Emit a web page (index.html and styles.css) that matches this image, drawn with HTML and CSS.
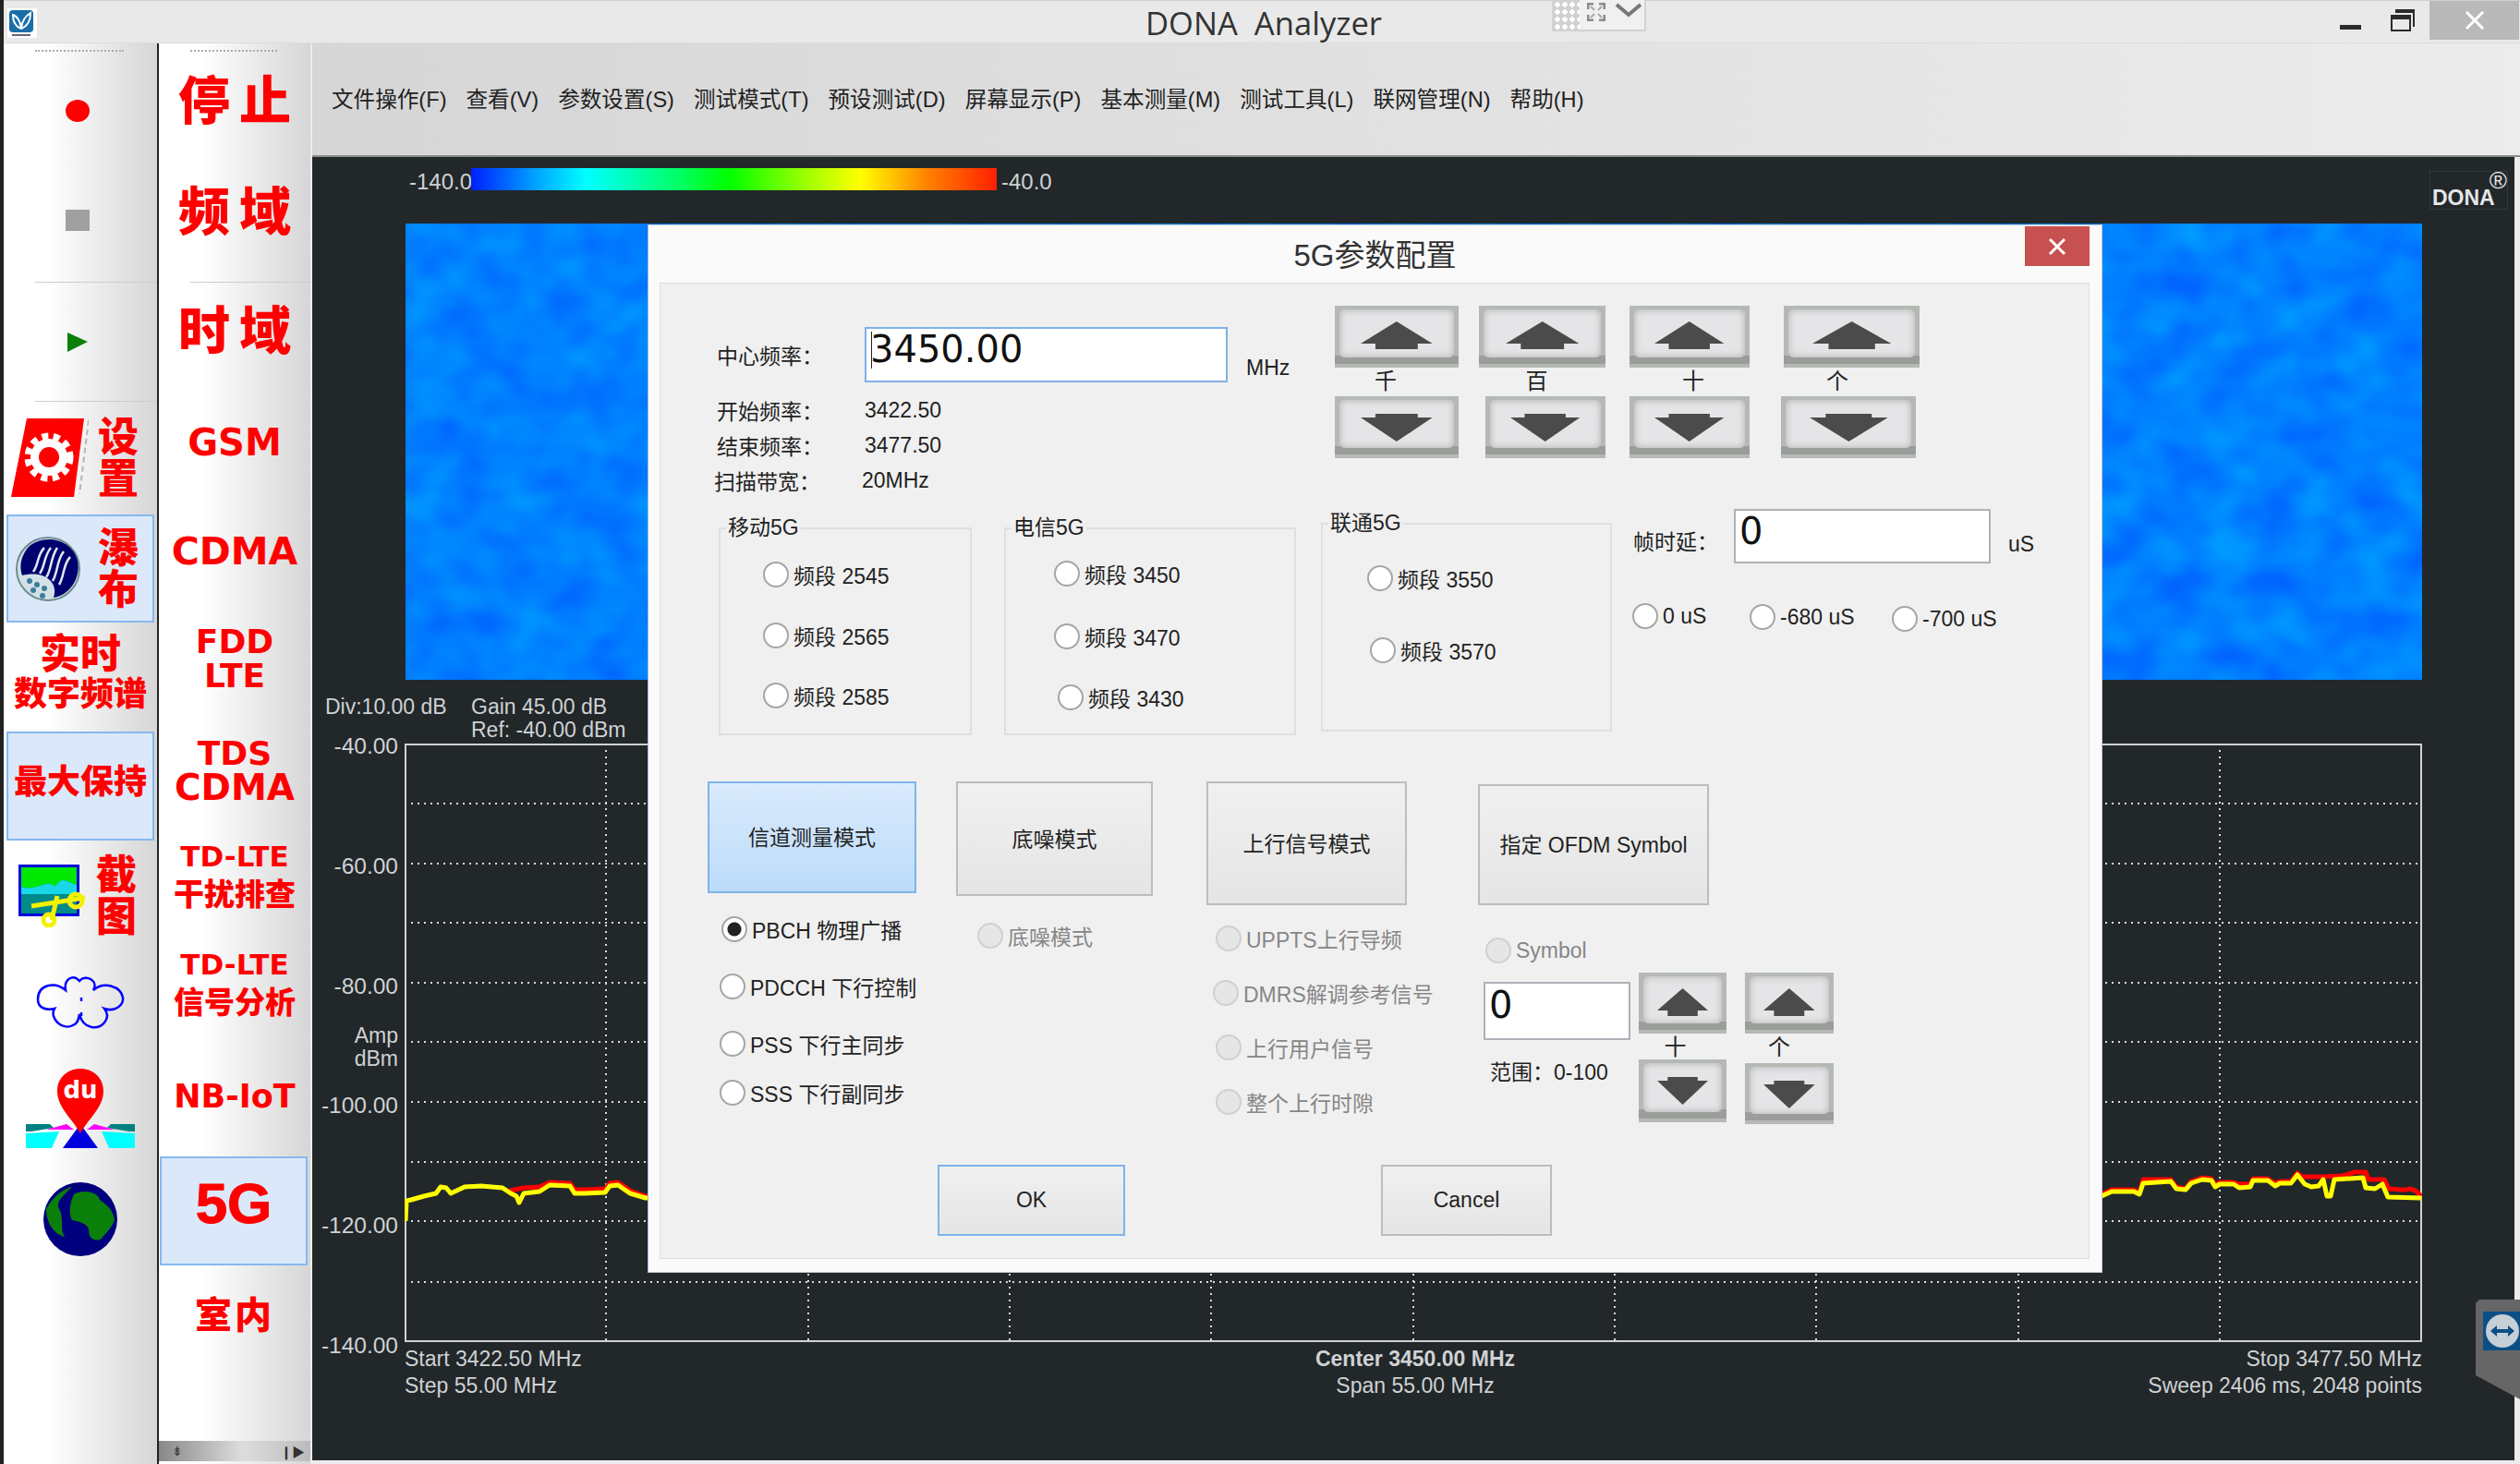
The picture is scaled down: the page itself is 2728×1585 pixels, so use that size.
FILE: index.html
```html
<!DOCTYPE html>
<html lang="zh-CN">
<head>
  <meta charset="UTF-8" />
  <title>DONA Analyzer</title>
  <link rel="stylesheet" href="styles.css">
</head>
<body>
  <svg class="defs" width="0" height="0">
    <symbol id="arrow-up" viewBox="0 0 78 30" preserveAspectRatio="none"><path d="M39 0 78 24H62V30H16V24H0Z"/></symbol>
    <symbol id="arrow-down" viewBox="0 0 78 30" preserveAspectRatio="none"><path d="M16 0H62V4H78L39 30 0 4H16Z"/></symbol>
  </svg>

  <div class="app">
    <header class="titlebar">
      <div class="title-left">
        <svg class="app-logo" viewBox="0 0 32 32">
          <rect width="32" height="32" fill="#fff"/>
          <rect x="2" y="2" width="26" height="24" rx="4" fill="#1a6ea8"/>
          <path d="M6 7C10 8 14 14 15 21 16 14 20 8 25 5 25 12 23 19 15 22 9 20 6 14 6 7Z" fill="none" stroke="#fff" stroke-width="2"/>
          <rect x="5" y="28" width="20" height="2" fill="#667"/>
        </svg>
      </div>
      <div class="title">DONA&nbsp; Analyzer</div>
      <div class="win-controls">
        <span class="win-min"></span>
        <svg class="win-restore" viewBox="0 0 26 24"><path d="M5 1H25V19M1 7H21V23H1Z" fill="none" stroke="#2b2b2b" stroke-width="2"/><rect x="1" y="7" width="20" height="4" fill="#2b2b2b"/><rect x="5" y="1" width="20" height="3" fill="#2b2b2b"/></svg>
        <span class="win-close"><svg viewBox="0 0 20 20"><path d="M1 1 19 19M19 1 1 19" stroke="#fff" stroke-width="3"/></svg></span>
      </div>
    </header>

    <!-- remote session widget sitting on the title bar -->
    <div class="remote-bar">
      <span class="remote-grip"></span>
      <svg class="remote-icon" viewBox="0 0 20 20"><path d="M1 7V1H7M13 1H19V7M19 13V19H13M7 19H1V13" fill="none" stroke="#8a8a8a" stroke-width="3"/><path d="M4 4 8 8M16 4 12 8M4 16 8 12M16 16 12 12" stroke="#aaa" stroke-width="2"/></svg>
      <svg class="remote-icon-wide" viewBox="0 0 30 16"><path d="M2 2 15 13 28 2" fill="none" stroke="#777" stroke-width="4"/></svg>
    </div>

    <div class="workspace">
      <nav class="toolbar toolbar-a">
        <div class="grip"></div>
        <div class="tool tool-nudge"><span class="rec-dot"></span></div>
        <div class="tool tool-nudge"><span class="stop-box"></span></div>
        <div></div>
        <div class="tool-sep"></div>
        <div class="tool tool-nudge"><svg class="play-icon" viewBox="0 0 22 21"><path d="M0 0 22 10 0 21Z" fill="#0a800a"/></svg></div>
        <div class="tool-sep"></div>
        <div class="tool tool-split tool-gear">
          <svg class="gear-icon" viewBox="0 0 84 86">
            <path d="M17 0H79L68 85H0Z" fill="#f00"/>
            <path d="M84 2 74 82" stroke="#b5b5b5" stroke-width="2" stroke-dasharray="6 4"/>
            <circle cx="41" cy="42" r="23" fill="none" stroke="#fff" stroke-width="7" stroke-dasharray="7 5.5"/>
            <circle cx="41" cy="42" r="20" fill="#fff"/>
            <circle cx="41" cy="42" r="11" fill="#f00"/>
          </svg>
          <div class="stack">设<br>置</div>
        </div>
        <div class="tool tool-split tool-on">
          <svg class="fall-icon" viewBox="0 0 72 74">
            <circle cx="36" cy="37" r="34" fill="#d4e0e8" stroke="#6b8f8f" stroke-width="2"/>
            <path d="M14 14C30-2 62 4 68 28 72 48 58 66 42 68 48 50 30 38 8 44 4 32 8 22 14 14Z" fill="#00006e"/>
            <g fill="none" stroke="#dfe8f0" stroke-width="2.5">
              <path d="M20 40C26 32 24 22 32 14"/><path d="M27 42C33 34 31 24 39 14"/><path d="M34 46C40 38 38 26 46 14"/><path d="M41 50C47 40 45 28 53 18"/><path d="M48 54C54 44 52 32 60 24"/>
            </g>
            <g fill="#3a7f9a"><circle cx="16" cy="50" r="3"/><circle cx="24" cy="54" r="3"/><circle cx="32" cy="58" r="3"/><circle cx="20" cy="60" r="3"/><circle cx="30" cy="66" r="3"/></g>
          </svg>
          <div class="stack">瀑<br>布</div>
        </div>
        <div class="tool tool-lines tool-up"><span class="zh-44">实时</span><span class="zh-36">数字频谱</span></div>
        <div class="tool tool-on tool-up"><span class="zh-36">最大保持</span></div>
        <div class="tool tool-split tool-shot">
          <svg class="shot-icon" viewBox="0 0 74 68">
            <rect width="66" height="56" fill="#00d"/>
            <rect x="3" y="3" width="60" height="50" fill="#008a8a"/>
            <path d="M3 3H63V22C50 18 48 12 40 24 30 14 20 30 3 24Z" fill="#00e800"/>
            <path d="M3 24C20 30 30 14 40 24 48 12 50 18 63 22V32H3Z" fill="#18d8e8"/>
            <g fill="none" stroke="#f2f200" stroke-width="5"><path d="M14 45 72 36"/><path d="M42 34 36 60"/><circle cx="62" cy="39" r="7"/><circle cx="33" cy="60" r="6"/></g>
          </svg>
          <div class="stack">截<br>图</div>
        </div>
        <div class="tool">
          <svg class="cloud-icon" viewBox="0 0 96 62">
            <path d="M47 8C40 0 30 6 32 18 20 8 2 12 2 28 2 38 12 40 20 38 14 48 28 62 40 56 46 54 46 48 47 44 48 48 50 56 60 58 72 60 82 48 74 38 86 42 95 34 94 26 92 14 74 8 62 18 68 8 54 0 47 8Z" fill="none" stroke="#00f" stroke-width="2.5"/>
            <path d="M49 26V30M49 42V46" stroke="#00f" stroke-width="2.5"/>
          </svg>
        </div>
        <div class="tool">
          <svg class="pin-icon" viewBox="0 0 118 90">
            <path d="M0 62H26L30 66 6 70H0ZM118 62H92L88 66 112 70H118Z" fill="#008080"/>
            <path d="M22 68 44 62 52 68ZM96 68 74 62 66 68Z" fill="#f0f"/>
            <path d="M0 72 36 70 28 88H0ZM118 72 82 70 90 88H118Z" fill="#0ff"/>
            <path d="M40 88 59 62 78 88Z" fill="#00d"/>
            <path d="M59 72C50 56 34 44 34 26 34 12 45 2 59 2 73 2 84 12 84 26 84 44 68 56 59 72Z" fill="#f00"/>
            <text class="pin-text" x="59" y="34">du</text>
          </svg>
        </div>
        <div class="tool">
          <svg class="globe-icon" viewBox="0 0 82 82">
            <circle cx="41" cy="41" r="40" fill="#00007e"/>
            <path d="M34 14C46 8 60 12 62 20 70 26 76 30 78 42 74 52 68 56 64 62 56 66 50 62 50 52 48 46 42 44 32 42 28 34 30 22 34 14Z" fill="#0a800a"/>
            <path d="M4 30C10 18 22 8 32 6 22 16 14 22 18 30 24 40 18 52 24 60 14 58 4 46 4 30Z" fill="#0a800a"/>
          </svg>
        </div>
      </nav>

      <nav class="toolbar toolbar-b">
        <div class="grip"></div>
        <div class="tool tool-low"><span class="zh-56">停止</span></div>
        <div class="tool tool-low"><span class="zh-56">频域</span></div>
        <div></div>
        <div class="tool-sep"></div>
        <div class="tool tool-low"><span class="zh-56">时域</span></div>
        <div class="tool tool-low"><span class="lat lat-40">GSM</span></div>
        <div class="tool tool-low"><span class="lat lat-41">CDMA</span></div>
        <div class="tool tool-lines tool-tight tool-low"><span class="lat lat-36">FDD</span><span class="lat lat-36">LTE</span></div>
        <div class="tool tool-lines tool-tight tool-low"><span class="lat lat-36">TDS</span><span class="lat lat-39">CDMA</span></div>
        <div class="tool tool-lines tool-low"><span class="lat lat-31">TD-LTE</span><span class="zh-34">干扰排查</span></div>
        <div class="tool tool-lines tool-low"><span class="lat lat-31">TD-LTE</span><span class="zh-34">信号分析</span></div>
        <div class="tool tool-low"><span class="lat lat-35">NB-IoT</span></div>
        <div></div>
        <div class="tool tool-on tool-5g"><span class="big-5g">5G</span></div>
        <div class="tool"><span class="zh-40">室内</span></div>
        <div></div>
        <div class="scroll-strip"><span class="scroll-left">⇟</span><span class="scroll-right">❙▶</span></div>
      </nav>

      <main class="main">
        <div class="menubar">
          <span>文件操作(F)</span><span>查看(V)</span><span>参数设置(S)</span><span>测试模式(T)</span><span>预设测试(D)</span><span>屏幕显示(P)</span><span>基本测量(M)</span><span>测试工具(L)</span><span>联网管理(N)</span><span>帮助(H)</span>
        </div>

        <section class="plot">
          <div class="scale">
            <span class="scale-min">-140.0</span>
            <span class="scale-bar"></span>
            <span class="scale-max">-40.0</span>
          </div>

          <svg class="waterfall">
            <filter id="fall-noise" color-interpolation-filters="sRGB" x="0" y="0" width="100%" height="100%">
              <feTurbulence type="fractalNoise" baseFrequency="0.02 0.024" numOctaves="2" seed="7"/>
              <feColorMatrix values="0 0 0 0 0  0.3 0 0 0 0.35  0 0 0 0 1  0 0 0 0 1"/>
            </filter>
            <rect width="100%" height="100%" filter="url(#fall-noise)"/>
          </svg>

          <div class="readout">
            <div class="readout-div">Div:10.00 dB</div>
            <div>Gain 45.00 dB<br>Ref: -40.00 dBm</div>
          </div>

          <div class="chart">
            <div class="axis">
              <div class="tick">-40.00</div>
              <div class="tick">-60.00</div>
              <div class="tick">-80.00</div>
              <div class="tick">-100.00</div>
              <div class="tick">-120.00</div>
              <div class="tick">-140.00</div>
              <div class="axis-unit">Amp<br>dBm</div>
            </div>
            <svg class="chart-svg" viewBox="0 0 2184 648">
              <rect x="1" y="1" width="2182" height="646" fill="none" stroke="#cfd2d3" stroke-width="2"/>
              <g class="grid-lines">
                <path d="M0 65H2184M0 130H2184M0 194H2184M0 259H2184M0 323H2184M0 388H2184M0 453H2184M0 517H2184M0 583H2184"/>
                <path d="M218 0V648M437 0V648M655 0V648M873 0V648M1092 0V648M1310 0V648M1528 0V648M1747 0V648M1965 0V648"/>
              </g>
              <polyline class="trace-max" points="114,484 129,481 146,480 157,475 179,476 184,483 195,483 217,482 222,476 231,475 244,484 261,490 1837,488 1848,483 1872,483 1878,486 1882,472 1912,472 1918,480 1928,482 1934,474 1946,470 1956,471 1960,478 1965,475 1980,475 1986,477 1998,477 2001,471 2017,471 2025,476 2030,474 2042,474 2049,465 2054,469 2077,469 2098,468 2111,464 2123,464 2126,472 2143,472 2148,482 2160,483 2167,483 2170,482 2177,484 2183,490"/>
              <polyline class="trace-live" points="1,517 2,495 7,494 21,490 34,487 39,480 45,481 50,487 65,480 83,479 106,481 115,487 121,490 124,497 129,487 146,485 157,478 179,479 184,487 195,487 217,486 222,479 231,478 244,487 261,492 1837,490 1848,485 1872,485 1878,488 1882,476 1912,474 1918,482 1928,483 1934,476 1946,472 1956,473 1960,480 1965,477 1980,477 1986,481 1998,480 2001,473 2017,473 2025,479 2030,476 2042,476 2049,467 2057,477 2064,480 2072,479 2077,472 2081,490 2085,490 2089,472 2120,470 2123,481 2133,482 2141,477 2147,491 2183,492"/>
            </svg>
          </div>

          <div class="plot-footer">
            <div>Start 3422.50 MHz<br>Step 55.00 MHz</div>
            <div class="footer-mid"><b>Center 3450.00 MHz</b><br>Span 55.00 MHz</div>
            <div class="footer-end">Stop 3477.50 MHz<br>Sweep 2406 ms, 2048 points</div>
          </div>

          <div class="brand"><span class="brand-reg">®</span><span class="brand-name">DONA</span></div>

          <!-- 5G config dialog -->
          <div class="dialog">
            <div class="dialog-title">5G参数配置</div>
            <button class="dialog-close"><svg viewBox="0 0 20 20"><path d="M2 2 18 18M18 2 2 18" stroke="#fff" stroke-width="3"/></svg></button>
            <div class="panel">

              <div class="top-row">
                <div class="freq">
                  <div class="freq-main">
                    <span class="freq-label">中心频率：</span>
                    <input class="big-input big-input-focus" type="text" value="3450.00">
                    <span class="freq-unit">MHz</span>
                  </div>
                  <div class="freq-row"><span class="freq-label">开始频率：</span><span>3422.50</span></div>
                  <div class="freq-row"><span class="freq-label">结束频率：</span><span>3477.50</span></div>
                  <div class="freq-row freq-row-last"><span class="freq-label">扫描带宽：</span><span>20MHz</span></div>
                </div>

                <div class="stepper">
                  <div class="step-col col-a">
                    <button class="step"><svg class="arrow"><use href="#arrow-up"/></svg></button>
                    <div class="step-label shift-12">千</div>
                    <button class="step step-dn"><svg class="arrow"><use href="#arrow-down"/></svg></button>
                  </div>
                  <div class="step-col col-b">
                    <button class="step"><svg class="arrow"><use href="#arrow-up"/></svg></button>
                    <div class="step-label shift-6">百</div>
                    <button class="step step-dn step-b-dn"><svg class="arrow"><use href="#arrow-down"/></svg></button>
                  </div>
                  <div class="step-col col-c">
                    <button class="step"><svg class="arrow"><use href="#arrow-up"/></svg></button>
                    <div class="step-label shift-r4">十</div>
                    <button class="step step-dn"><svg class="arrow"><use href="#arrow-down"/></svg></button>
                  </div>
                  <div class="step-col col-d">
                    <button class="step step-d-up"><svg class="arrow"><use href="#arrow-up"/></svg></button>
                    <div class="step-label shift-14">个</div>
                    <button class="step step-dn"><svg class="arrow"><use href="#arrow-down"/></svg></button>
                  </div>
                </div>
              </div>

              <div class="band-row">
                <div class="group group-mobile">
                  <span class="group-name">移动5G</span>
                  <label class="radio"><input type="radio" name="band"><span>频段 2545</span></label>
                  <label class="radio"><input type="radio" name="band"><span>频段 2565</span></label>
                  <label class="radio"><input type="radio" name="band"><span>频段 2585</span></label>
                </div>
                <div class="group group-telecom">
                  <span class="group-name">电信5G</span>
                  <label class="radio"><input type="radio" name="band"><span>频段 3450</span></label>
                  <label class="radio"><input type="radio" name="band"><span>频段 3470</span></label>
                  <label class="radio"><input type="radio" name="band"><span>频段 3430</span></label>
                </div>
                <div class="group group-unicom">
                  <span class="group-name">联通5G</span>
                  <label class="radio"><input type="radio" name="band"><span>频段 3550</span></label>
                  <label class="radio"><input type="radio" name="band"><span>频段 3570</span></label>
                </div>
                <div class="delay">
                  <div class="delay-row">
                    <span class="delay-label">帧时延：</span>
                    <input class="big-input delay-input" type="text" value="0">
                    <span class="delay-unit">uS</span>
                  </div>
                  <div class="delay-opts">
                    <label class="radio"><input type="radio" name="delay"><span>0 uS</span></label>
                    <label class="radio"><input type="radio" name="delay"><span>-680 uS</span></label>
                    <label class="radio"><input type="radio" name="delay"><span>-700 uS</span></label>
                  </div>
                </div>
              </div>

              <div class="modes">
                <div class="mode-col mode-a">
                  <button class="mode-btn mode-on">信道测量模式</button>
                  <div class="mode-list">
                    <label class="radio"><input type="radio" name="mode" checked><span>PBCH 物理广播</span></label>
                    <label class="radio"><input type="radio" name="mode"><span>PDCCH 下行控制</span></label>
                    <label class="radio"><input type="radio" name="mode"><span>PSS 下行主同步</span></label>
                    <label class="radio"><input type="radio" name="mode"><span>SSS 下行副同步</span></label>
                  </div>
                </div>
                <div class="mode-col mode-b">
                  <button class="mode-btn">底噪模式</button>
                  <div class="mode-list">
                    <label class="radio"><input type="radio" disabled><span>底噪模式</span></label>
                  </div>
                </div>
                <div class="mode-col mode-c">
                  <button class="mode-btn">上行信号模式</button>
                  <div class="mode-list">
                    <label class="radio"><input type="radio" disabled><span>UPPTS上行导频</span></label>
                    <label class="radio"><input type="radio" disabled><span>DMRS解调参考信号</span></label>
                    <label class="radio"><input type="radio" disabled><span>上行用户信号</span></label>
                    <label class="radio"><input type="radio" disabled><span>整个上行时隙</span></label>
                  </div>
                </div>
                <div class="mode-col mode-d">
                  <button class="mode-btn">指定 OFDM Symbol</button>
                  <label class="radio symbol-radio"><input type="radio" disabled><span>Symbol</span></label>
                  <div class="symbol-row">
                    <div class="symbol-left">
                      <input class="big-input symbol-input" type="text" value="0">
                      <div class="symbol-range">范围：0-100</div>
                    </div>
                    <div class="step-col mini-a">
                      <button class="step"><svg class="arrow"><use href="#arrow-up"/></svg></button>
                      <div class="step-label mini-label shift-16">十</div>
                      <button class="step step-dn"><svg class="arrow"><use href="#arrow-down"/></svg></button>
                    </div>
                    <div class="step-col mini-b">
                      <button class="step"><svg class="arrow"><use href="#arrow-up"/></svg></button>
                      <div class="step-label mini-label mini-label-tall shift-20">个</div>
                      <button class="step step-dn"><svg class="arrow"><use href="#arrow-down"/></svg></button>
                    </div>
                  </div>
                </div>
              </div>

              <div class="actions">
                <button class="action action-ok">OK</button>
                <button class="action action-cancel">Cancel</button>
              </div>
            </div>
          </div>
        </section>
      </main>
    </div>

    <!-- remote control side tab -->
    <div class="side-tab">
      <span class="side-tab-logo"><svg viewBox="0 0 40 42"><circle cx="21" cy="21" r="18" fill="#c6ced6"/><path d="M8 21 15 15V19H27V15L34 21 27 27V23H15V27Z" fill="#0c4f86"/></svg></span>
    </div>
  </div>
</body>
</html>
```

FILE: styles.css
```css
* {
  box-sizing: border-box;
}
html, body {
  margin: 0;
  height: 100%;
}
body {
  background: #222;
  font-family: "Liberation Sans", "Noto Sans CJK SC", sans-serif;
  font-size: 23px;
  color: #222;
  overflow: hidden;
}
button {
  font: inherit;
  color: inherit;
}
.defs {
  position: absolute;
}
.app {
  position: relative;
  display: flex;
  flex-direction: column;
  height: 100vh;
  padding-left: 4px;
}

/* Title bar */
.titlebar {
  flex: none;
  height: 47px;
  display: grid;
  grid-template-columns: 1fr auto 1fr;
  align-items: center;
  background: #e9e9e9;
  border-top: 1px solid #cfcfcf;
  border-bottom: 1px solid #dcdcdc;
}
.title-left {
  padding-left: 4px;
}
.app-logo {
  display: block;
  width: 32px;
  height: 32px;
}
.title {
  margin-left: 4px;
  font-family: "Open Sans", sans-serif;
  font-size: 34.6px;
  color: #333;
  white-space: pre;
}
.win-controls {
  display: flex;
  justify-content: flex-end;
  align-items: flex-start;
  height: 100%;
  margin-right: 1px;
}
.win-min {
  width: 23px;
  height: 5px;
  margin-top: 26px;
  background: #2b2b2b;
}
.win-restore {
  width: 26px;
  height: 24px;
  margin: 9px 0 0 32px;
}
.win-close {
  display: flex;
  align-items: center;
  justify-content: center;
  width: 97px;
  height: 42px;
  margin-left: 16px;
  background: #b9b9b9;
}
.win-close svg {
  width: 20px;
  height: 20px;
}

/* Widget on the title bar */
.remote-bar {
  position: absolute;
  left: 1680px;
  top: 0;
  width: 102px;
  height: 34px;
  display: flex;
  align-items: center;
  background: #f0f0f0;
  border: 2px solid #d2d2d2;
  border-top: none;
}
.remote-grip {
  width: 28px;
  height: 100%;
  background-color: #d0d0d0;
  background-image: radial-gradient(circle, #fff 2.5px, transparent 3px);
  background-size: 8px 8px;
  background-position: 0 1px;
}
.remote-icon {
  width: 20px;
  height: 20px;
  margin: 0 0 6px 8px;
}
.remote-icon-wide {
  width: 30px;
  height: 16px;
  margin: 0 0 10px 10px;
}

/* Left toolbars */
.workspace {
  flex: 1;
  display: flex;
  min-height: 0;
}
.toolbar {
  flex: none;
  display: grid;
  background: linear-gradient(90deg, #fff 28%, #d6d6d6);
  color: #f00;
  font-weight: 900;
}
.toolbar-a {
  width: 166px;
  margin-right: 2px;
  grid-template-rows: 13px 120px 116px 9px 1px 128px 1px 122px 117px 118px 118px 120px 110px 120px 120px 1fr;
}
.toolbar-b {
  width: 164px;
  grid-template-rows: 13px 96px 144px 5px 1px 102px 138px 98px 134px 108px 122px 112px 130px 2px 118px 102px 1fr 22px;
  padding-bottom: 3px;
}
.grip {
  margin: 7px 36px 0 34px;
  height: 2px;
  border-top: 2px dotted #aaa;
}
.tool {
  display: flex;
  align-items: center;
  justify-content: center;
  min-height: 0;
  min-width: 0;
}
.tool-nudge {
  padding-right: 7px;
}
.tool-up {
  padding-bottom: 8px;
}
.tool-low {
  padding-top: 3px;
}
.tool-sep {
  margin-left: 34px;
  background: #ccc;
}
.tool-lines {
  flex-direction: column;
}
.tool-tight {
  line-height: 37px;
}
.tool-on {
  margin: 0 3px;
  background: #dbe8fa;
  border: 2px solid #86b8ef;
}
.tool-5g {
  margin: 0 3px 0 1px;
}
.tool-split {
  justify-content: flex-start;
}
.tool-gear {
  padding-left: 8px;
}
.tool-shot {
  padding-left: 16px;
}
.rec-dot {
  width: 26px;
  height: 24px;
  border-radius: 50%;
  background: #f00;
}
.stop-box {
  width: 26px;
  height: 23px;
  background: #a0a0a0;
}
.play-icon {
  width: 22px;
  height: 21px;
}
.gear-icon {
  width: 84px;
  height: 86px;
}
.fall-icon {
  width: 72px;
  height: 74px;
  margin-left: 7px;
}
.shot-icon {
  width: 74px;
  height: 68px;
}
.cloud-icon {
  width: 96px;
  height: 62px;
}
.pin-icon {
  width: 118px;
  height: 90px;
}
.pin-text {
  fill: #fff;
  font-family: "DejaVu Sans", sans-serif;
  font-size: 26px;
  font-weight: 700;
  text-anchor: middle;
}
.globe-icon {
  width: 82px;
  height: 82px;
}
.stack {
  margin-left: 10px;
  font-size: 44px;
  line-height: 45px;
}
.tool-split.tool-on .stack {
  margin-left: 18px;
}
.zh-56 {
  font-size: 56px;
  letter-spacing: 10px;
  margin-right: -10px;
  line-height: 60px;
}
.zh-44 {
  font-size: 44px;
  line-height: 46px;
}
.zh-40 {
  font-size: 40px;
  letter-spacing: 3px;
}
.zh-36 {
  font-size: 36px;
  line-height: 40px;
  white-space: nowrap;
}
.zh-34 {
  font-size: 33px;
  line-height: 44px;
  white-space: nowrap;
}
.lat {
  font-family: "DejaVu Sans", sans-serif;
  font-weight: 700;
  white-space: nowrap;
}
.lat-31 { font-size: 31px; line-height: 40px; }
.lat-35 { font-size: 35px; }
.lat-36 { font-size: 36px; }
.lat-39 { font-size: 39px; }
.lat-40 { font-size: 40px; }
.lat-41 { font-size: 41px; }
.big-5g {
  font-family: "Liberation Sans", sans-serif;
  font-weight: 700;
  font-size: 62px;
  margin-bottom: 18px;
  -webkit-text-stroke: 1px #f00;
}
.scroll-strip {
  display: flex;
  justify-content: space-between;
  align-items: center;
  padding: 0 6px 0 14px;
  background: linear-gradient(90deg, #888, #ddd 55%, #bbb);
  color: #333;
  font-size: 14px;
  font-weight: 400;
}

/* Main area */
.main {
  flex: 1;
  min-width: 0;
  display: flex;
  flex-direction: column;
  padding-left: 2px;
  background: #ececec;
}
.menubar {
  flex: none;
  height: 123px;
  display: flex;
  align-items: center;
  gap: 21px;
  padding: 0 0 3px 21px;
  background: linear-gradient(90deg, #d6d6d6, #ececec);
  border-bottom: 2px solid #8a8a8a;
  font-size: 23.6px;
  color: #222;
  white-space: nowrap;
}
.plot {
  position: relative;
  flex: none;
  height: 1411px;
  margin-right: 6px;
  background: #22272a;
  color: #cfd2d3;
}
.scale {
  display: flex;
  height: 24px;
  margin-top: 12px;
  padding-left: 105px;
  font-size: 24px;
  line-height: 29px;
}
.scale-min {
  width: 67px;
}
.scale-bar {
  width: 569px;
  background: linear-gradient(90deg, #0020ff, #00a0ff 12%, #00ffff 22%, #00ff60 40%, #00ff00 49%, #a0ff00 64%, #ffff00 74%, #ff8000 87%, #ff2000);
}
.scale-max {
  margin-left: 5px;
}
.waterfall {
  display: block;
  width: 2183px;
  height: 494px;
  margin: 36px 0 0 101px;
}
.readout {
  display: flex;
  height: 69px;
  padding: 17px 0 0 14px;
  line-height: 25px;
}
.readout-div {
  width: 158px;
}
.chart {
  display: flex;
  height: 648px;
}
.axis {
  position: relative;
  flex: none;
  width: 93px;
  margin: -10px 7px 0 0;
  display: flex;
  flex-direction: column;
  gap: 104.8px;
  font-size: 24.5px;
}
.tick {
  height: 25px;
  line-height: 25px;
  text-align: right;
}
.axis-unit {
  position: absolute;
  right: 0;
  top: 314px;
  font-size: 23px;
  line-height: 25px;
  text-align: right;
}
.chart-svg {
  display: block;
  width: 2184px;
  height: 648px;
}
.grid-lines path {
  fill: none;
  stroke: #d8dadb;
  stroke-width: 2;
  stroke-dasharray: 2 5;
}
.trace-max,
.trace-live {
  fill: none;
  stroke-width: 5;
  stroke-linejoin: round;
}
.trace-max {
  stroke: #f00;
}
.trace-live {
  stroke: #ff0;
}
.plot-footer {
  display: grid;
  grid-template-columns: 1fr auto 1fr;
  width: 2184px;
  margin-left: 100px;
  padding-top: 4px;
  line-height: 29px;
}
.footer-mid {
  margin-left: 4px;
  text-align: center;
}
.footer-end {
  text-align: right;
}
.brand {
  position: absolute;
  right: 7px;
  top: 15px;
  width: 85px;
  height: 42px;
  border: 1px solid #33383b;
  color: #e6e6e6;
}
.brand-name {
  position: absolute;
  left: 2px;
  bottom: 2px;
  font-weight: 700;
  font-size: 23px;
  line-height: 20px;
}
.brand-reg {
  position: absolute;
  right: 0;
  top: -1px;
  font-size: 26px;
  line-height: 20px;
}

/* Dialog */
.dialog {
  position: absolute;
  left: 363px;
  top: 73px;
  width: 1575px;
  height: 1135px;
  display: flex;
  flex-direction: column;
  background: #fafafa;
  border: 1px solid #c4c4c4;
  border-left-color: #9dbbe0;
  color: #222;
}
.dialog-title {
  flex: none;
  height: 62px;
  padding-bottom: 3px;
  display: flex;
  align-items: center;
  justify-content: center;
  font-size: 33px;
  color: #333;
}
.dialog-close {
  position: absolute;
  right: 13px;
  top: 1px;
  width: 70px;
  height: 43px;
  display: flex;
  align-items: center;
  justify-content: center;
  padding: 0;
  border: none;
  background: #c75050;
}
.dialog-close svg {
  width: 20px;
  height: 20px;
}
.panel {
  flex: 1;
  margin: 0 13px 14px 12px;
  background: #f0f0f0;
  border: 1px solid #dedede;
}

/* Frequency block and step buttons */
.top-row {
  display: flex;
  height: 244px;
  padding: 24px 0 0 61px;
}
.freq {
  width: 669px;
  margin-top: 23px;
}
.freq-main {
  display: flex;
  align-items: center;
  height: 60px;
}
.freq-label {
  width: 160px;
  flex: none;
}
.freq-unit {
  margin: 28px 0 0 20px;
}
.big-input {
  display: block;
  padding: 0 0 12px 4px;
  background: #fff;
  border: 2px solid #b0b0b8;
  font-family: "DejaVu Sans", sans-serif;
  font-size: 40px;
  color: #111;
}
.big-input-focus {
  width: 393px;
  height: 60px;
  border-color: #7fb0e8;
  background: #fff linear-gradient(#222, #222) 5px 3px / 1px 40px no-repeat;
}
.freq-row {
  display: flex;
  align-items: center;
  height: 38px;
}
.freq-main + .freq-row {
  margin-top: 11px;
}
.freq-row-last {
  margin-left: -3px;
}
.stepper {
  display: flex;
}
.step-col {
  flex: none;
  display: flex;
  flex-direction: column;
  align-items: flex-start;
}
.col-a { width: 134px; }
.col-b { width: 137px; margin-left: 22px; }
.col-c { width: 130px; margin-left: 26px; }
.col-d { width: 150px; margin-left: 34px; }
.step {
  position: relative;
  flex: none;
  display: flex;
  justify-content: center;
  align-items: flex-start;
  width: 100%;
  height: 67px;
  padding: 17px 0 0;
  border: none;
  background: linear-gradient(#b4b9b4 80%, #9b9d9b 80%, #9b9d9b 94%, #b4b9b4 94%);
}
.step-dn {
  padding-top: 19px;
}
.step::before {
  content: "";
  position: absolute;
  inset: 4px 5px 11px;
  border-radius: 6px;
  background: #e5e5e7;
  box-shadow: inset 0 0 7px 1px #b8b8b8;
}
.step-b-dn {
  width: 130px;
  margin-left: 7px;
}
.step-d-up {
  width: 147px;
  margin-left: 3px;
}
.col-d > .step:last-child {
  width: 146px;
}
.arrow {
  position: relative;
  width: 58%;
  height: 30px;
  fill: #4b4b4b;
}
.step-label {
  width: 100%;
  height: 31px;
  text-align: center;
  font-size: 24px;
  line-height: 29px;
}
.shift-12 { padding-right: 24px; }
.shift-6 { padding-right: 12px; }
.shift-14 { padding-right: 28px; }
.shift-r4 { padding-left: 8px; }
.shift-16 { padding-right: 16px; }
.shift-20 { padding-right: 22px; }

/* Radio buttons */
.radio {
  display: flex;
  align-items: center;
  gap: 5px;
  height: 28px;
  white-space: nowrap;
}
.radio input {
  appearance: none;
  flex: none;
  width: 28px;
  height: 28px;
  margin: 0;
  border: 2px solid #a6a6a6;
  border-radius: 50%;
  background: #fff;
}
.radio input:checked {
  background: radial-gradient(circle, #222 7px, #fff 8px);
}
.radio input:disabled {
  background: #e6e6e6;
  border-color: #d0d0d0;
}
.radio input:disabled + span {
  color: #868686;
}

/* Bands */
.band-row {
  display: flex;
  align-items: flex-start;
  height: 295px;
  padding-left: 63px;
}
.group {
  position: relative;
  display: flex;
  flex-direction: column;
  background: #f0f0f0;
  border: 2px solid #dfdfdf;
}
.group-name {
  position: absolute;
  left: 6px;
  top: -17px;
  padding: 0 2px;
  background: #f0f0f0;
  line-height: 30px;
}
.group-mobile {
  width: 274px;
  height: 225px;
  margin-top: 20px;
  padding: 35px 0 0 46px;
  gap: 37.5px;
}
.group-telecom {
  width: 316px;
  height: 225px;
  margin: 20px 0 0 35px;
  padding: 34px 0 0 52px;
  gap: 40px;
}
.group-telecom .radio:last-child {
  margin: -2px 0 0 4px;
}
.group-unicom {
  width: 315px;
  height: 226px;
  margin: 15px 0 0 27px;
  padding: 44px 0 0 48px;
  gap: 50px;
}
.group-unicom .radio:last-child {
  margin-left: 3px;
}
.delay {
  margin-left: 23px;
}
.delay-row {
  display: flex;
  align-items: flex-start;
}
.delay-label {
  width: 109px;
  padding-top: 17px;
}
.delay-input {
  width: 278px;
  height: 59px;
  padding-bottom: 12px;
}
.delay-unit {
  margin-left: 19px;
  padding-top: 25px;
}
.delay-opts {
  display: flex;
  margin: 43px 0 0 -1px;
}
.delay-opts .radio:nth-child(1) { width: 127px; }
.delay-opts .radio:nth-child(2) { width: 154px; margin-top: 1px; }
.delay-opts .radio:nth-child(3) { margin-top: 3px; }

/* Measurement modes */
.modes {
  display: flex;
  height: 415px;
  padding-left: 51px;
}
.mode-col {
  flex: none;
}
.mode-a { width: 269px; }
.mode-b { width: 271px; }
.mode-c { width: 294px; }
.mode-d { width: 385px; }
.mode-btn {
  display: block;
  padding: 0 0 3px;
  background: linear-gradient(#f0f0f0, #e5e5e5);
  border: 2px solid #bdbdbd;
}
.mode-a .mode-btn { width: 226px; height: 121px; }
.mode-b .mode-btn { width: 213px; height: 124px; }
.mode-c .mode-btn { width: 217px; height: 134px; }
.mode-d .mode-btn { width: 250px; height: 131px; margin-top: 3px; }
.mode-on {
  background: linear-gradient(#d9eafc, #bcdcfb);
  border-color: #7eb4ea;
}
.mode-list {
  display: flex;
  flex-direction: column;
}
.mode-a .mode-list {
  margin: 25px 0 0 13px;
  gap: 34px;
}
.mode-a .radio:first-child {
  margin-left: 2px;
}
.mode-a .radio:last-child {
  margin-top: -9px;
}
.mode-b .mode-list {
  margin: 29px 0 0 23px;
}
.mode-c .mode-list {
  margin: 22px 0 0 10px;
  gap: 31px;
}
.mode-c .radio:nth-child(2) {
  margin-left: -3px;
}
.symbol-radio {
  margin: 35px 0 0 8px;
}
.symbol-row {
  display: flex;
  margin-top: 10px;
}
.symbol-left {
  width: 174px;
  padding: 10px 0 0 6px;
}
.symbol-input {
  width: 159px;
  height: 63px;
  padding-bottom: 14px;
}
.symbol-range {
  margin: 22px 0 0 7px;
  line-height: 26px;
}
.mini-a { width: 95px; }
.mini-b { width: 96px; margin-left: 20px; }
.mini-label { height: 28px; }
.mini-label-tall { height: 32px; }
.mini-a .step,
.mini-b .step {
  height: 66px;
}
.mini-a .step:last-child {
  height: 68px;
}

/* OK / Cancel */
.actions {
  display: flex;
  padding-left: 300px;
}
.action {
  height: 77px;
  padding: 0;
  background: linear-gradient(#f0f0f0, #e5e5e5);
  border: 2px solid #bdbdbd;
}
.action-ok {
  width: 203px;
  border-color: #7eb4ea;
}
.action-cancel {
  width: 185px;
  margin-left: 277px;
}

/* Side tab at the right edge */
.side-tab {
  position: absolute;
  right: 0;
  top: 1407px;
  width: 48px;
  height: 108px;
  padding: 13px 0 0 8px;
  background: #666;
  clip-path: polygon(4px 0, 100% 0, 100% 100%, 0 76%, 0 4px);
}
.side-tab-logo {
  display: block;
  width: 40px;
  height: 42px;
  background: #0c4f86;
}
.side-tab-logo svg {
  display: block;
  width: 40px;
  height: 42px;
}
```
